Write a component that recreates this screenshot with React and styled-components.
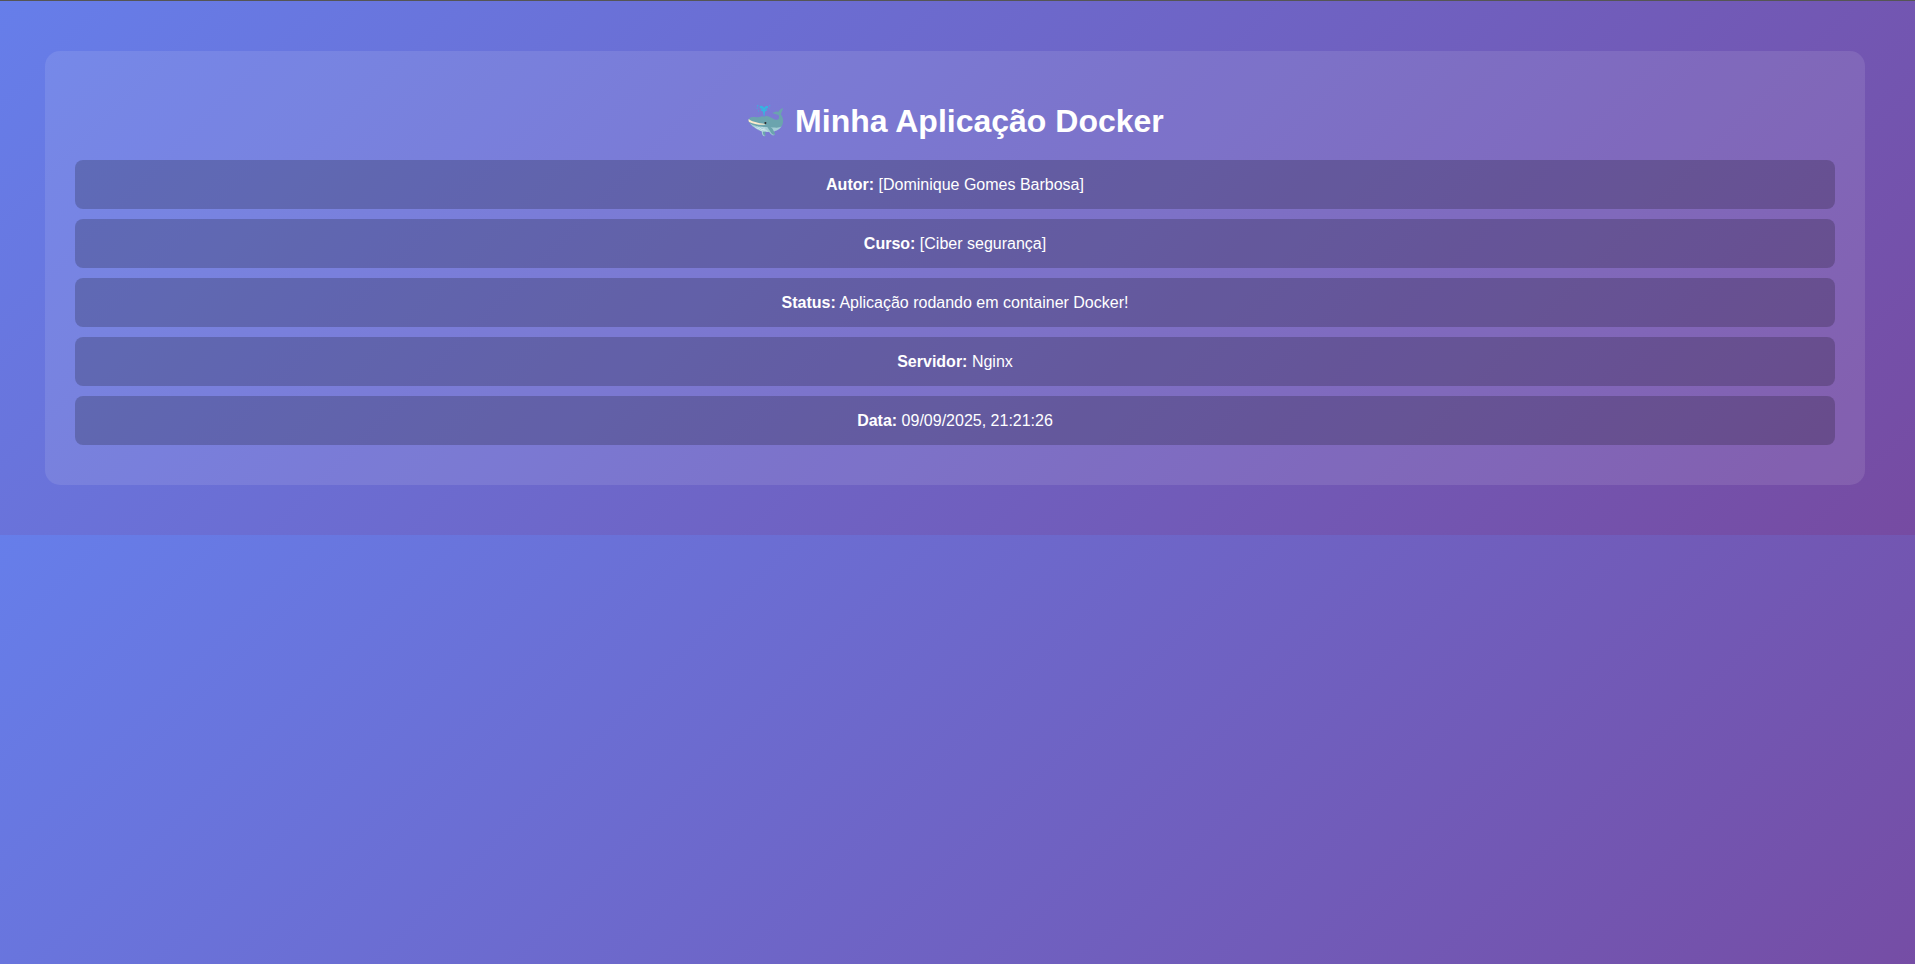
import React from 'react';
import styled, { createGlobalStyle } from 'styled-components';

const GlobalStyle = createGlobalStyle`
  body {
    margin: 0;
    color: #fff;
    font-family: 'Liberation Sans', Arial, sans-serif;
    font-size: 16px;
    line-height: 19px;
    text-align: center;
  }
`;

const Page = styled.div`
  min-height: 100vh;
  box-sizing: border-box;
  border-top: 1px solid #555;
  padding: 50px 50px 50px 45px;
  background-image: linear-gradient(135deg, #667eea 0%, #764ba2 100%);
  background-size: calc(100% + 5px) 534px;
  background-position: right top;
  background-repeat: repeat-y;
`;

const Card = styled.main`
  padding: 30px 30px 40px;
  border-radius: 15px;
  background: rgba(255, 255, 255, 0.1);
`;

const Title = styled.h1`
  margin: 0;
  padding: 22px 0 20px;
  font-size: 32px;
  line-height: 37px;
  font-weight: bold;
`;

const InfoList = styled.div`
  display: flex;
  flex-direction: column;
  gap: 10px;
`;

const InfoRow = styled.div`
  padding: 15px;
  border-radius: 8px;
  background: rgba(0, 0, 0, 0.2);
`;

const details = [
  ['Autor', '[Dominique Gomes Barbosa]'],
  ['Curso', '[Ciber segurança]'],
  ['Status', 'Aplicação rodando em container Docker!'],
  ['Servidor', 'Nginx'],
  ['Data', '09/09/2025, 21:21:26'],
];

export default function App() {
  return (
    <>
      <GlobalStyle />
      <Page>
        <Card>
          <Title>🐳 Minha Aplicação Docker</Title>
          <InfoList>
            {details.map(([label, value]) => (
              <InfoRow key={label}>
                <strong>{label}:</strong> {value}
              </InfoRow>
            ))}
          </InfoList>
        </Card>
      </Page>
    </>
  );
}
